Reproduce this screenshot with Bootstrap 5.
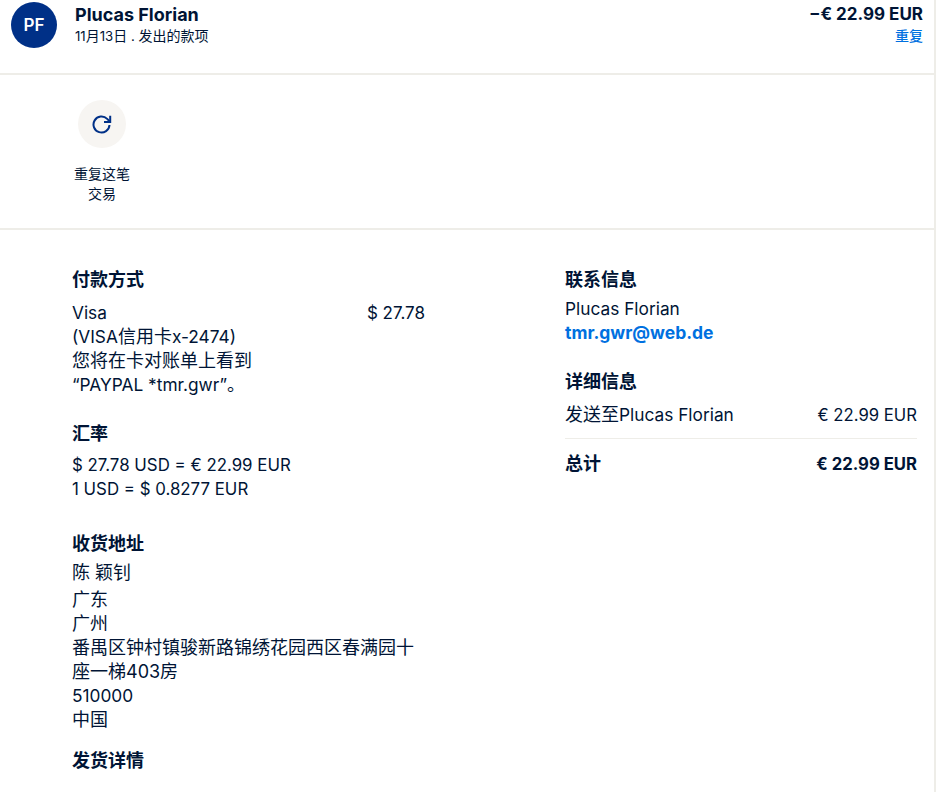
<!DOCTYPE html>
<html lang="zh">
<head>
<meta charset="utf-8">
<link href="https://cdn.jsdelivr.net/npm/bootstrap@5.3.0/dist/css/bootstrap.min.css" rel="stylesheet">
<style>
html,body{height:792px;overflow:hidden}
body{font-family:Inter,"Noto Sans CJK SC",sans-serif;color:#001435;background:#fff;font-size:17.3px;line-height:24px}
.zh{font-size:18px;line-height:1}
.shell{width:936px;height:792px;border-right:2px solid #eeede8;overflow:hidden}
.top-row{height:75px;border-bottom:2px solid #eeede8;padding:3px 11px 0 11px}
.avatar{width:46px;height:46px;border-radius:50%;background:#003087;color:#fff;font-weight:600;font-size:17px;margin-right:18px;margin-top:-1px}
.who{font-weight:700;font-size:18px;line-height:21px;margin-top:1px}
.amount{font-weight:700;font-size:17px;line-height:21px;margin-top:1px}
.sub{font-size:13.2px;line-height:20px;margin-top:1px}
.sub .zh{font-size:14px}
.repeat-link{font-size:14px;line-height:20px;font-weight:500;color:#0070e0;text-decoration:none;margin-top:1px}
.actions{height:155px;border-bottom:2px solid #eeede8;padding:25px 0 0 72px}
.act{width:60px}
.act-circle{width:48px;height:48px;border-radius:50%;background:#f7f5f2;margin-bottom:16px}
.act-label{font-size:14px;line-height:20px}
.main{padding:38px 17px 0 72px}
.left-col{width:354px;margin-right:140px}
.right-col{width:353px}
.hd{font-weight:700;font-size:18px;line-height:24px}
.gap-pay{margin-bottom:9px}
.gap-rate{margin-bottom:7px}
.gap-addr{margin-bottom:5px}
.gap-contact{margin-bottom:5px}
.gap-detail{margin-bottom:9px}
.pay-block{margin-bottom:25px}
.rate-block{margin-bottom:31px;font-size:16.85px}
.who-block{margin-bottom:3px}
.addr-block{margin-bottom:17px}
.contact-block{margin-bottom:25px}
.narrow{width:190px}
.price{font-size:16.7px}
.pay-price{font-size:17px}
.total-zh{font-size:18px}
.link-strong{font-weight:700;color:#0070e0;text-decoration:none;font-size:17.5px}
.sep{border-top:1px solid #eeede8;margin:11px 0 13px}
.addr{width:345px}
</style>
</head>
<body>
<div class="shell">
  <div class="top-row d-flex justify-content-between">
    <div class="d-flex align-items-start">
      <div class="avatar d-flex align-items-center justify-content-center">PF</div>
      <div><div class="who">Plucas Florian</div><div class="sub">11<span class="zh">月</span>13<span class="zh">日</span> . <span class="zh">发出的款项</span></div></div>
    </div>
    <div class="text-end">
      <div class="amount">−€ 22.99 EUR</div>
      <a class="repeat-link d-block" href="#">重复</a>
    </div>
  </div>
  <div class="actions">
    <div class="act text-center d-flex flex-column align-items-center">
      <div class="act-circle d-flex align-items-center justify-content-center">
        <svg width="20" height="20" viewBox="0 0 20 20" fill="none" stroke="#003087" stroke-width="2"><path d="M17.5 11A8 8 0 1 1 15.2 4.9L18 7.7"/><path d="M18.2 1.8V8H12"/></svg>
      </div>
      <div class="act-label">重复这笔交易</div>
    </div>
  </div>
  <div class="main d-flex">
    <div class="left-col">
      <div class="hd gap-pay">付款方式</div>
      <div class="d-flex justify-content-between pay-block">
        <div class="narrow">Visa<br>(VISA<span class="zh">信用卡</span>x-2474)<br><span class="zh">您将在卡对账单上看到</span><br>“PAYPAL *tmr.gwr”<span class="zh">。</span></div>
        <div class="pay-price">$ 27.78</div>
      </div>
      <div class="hd gap-rate">汇率</div>
      <div class="rate-block">$ 27.78 USD = € 22.99 EUR<br>1 USD = $ 0.8277 EUR</div>
      <div class="hd gap-addr">收货地址</div>
      <div class="addr who-block"><span class="zh">陈 颖钊</span></div>
      <div class="addr addr-block"><span class="zh">广东</span><br><span class="zh">广州</span><br><span class="zh">番禺区钟村镇骏新路锦绣花园西区春满园十</span><br><span class="zh">座一梯403房</span><br>510000<br><span class="zh">中国</span></div>
      <div class="hd">发货详情</div>
    </div>
    <div class="right-col">
      <div class="hd gap-contact">联系信息</div>
      <div class="contact-block">Plucas Florian<br><a class="link-strong" href="#">tmr.gwr@web.de</a></div>
      <div class="hd gap-detail">详细信息</div>
      <div class="d-flex justify-content-between"><span><span class="zh">发送至</span>Plucas Florian</span><span class="price">€ 22.99 EUR</span></div>
      <div class="sep"></div>
      <div class="d-flex justify-content-between fw-bold"><span class="total-zh">总计</span><span class="price">€ 22.99 EUR</span></div>
    </div>
  </div>
</div>
<script src="https://cdn.jsdelivr.net/npm/bootstrap@5.3.0/dist/js/bootstrap.bundle.min.js"></script>
</body>
</html>
